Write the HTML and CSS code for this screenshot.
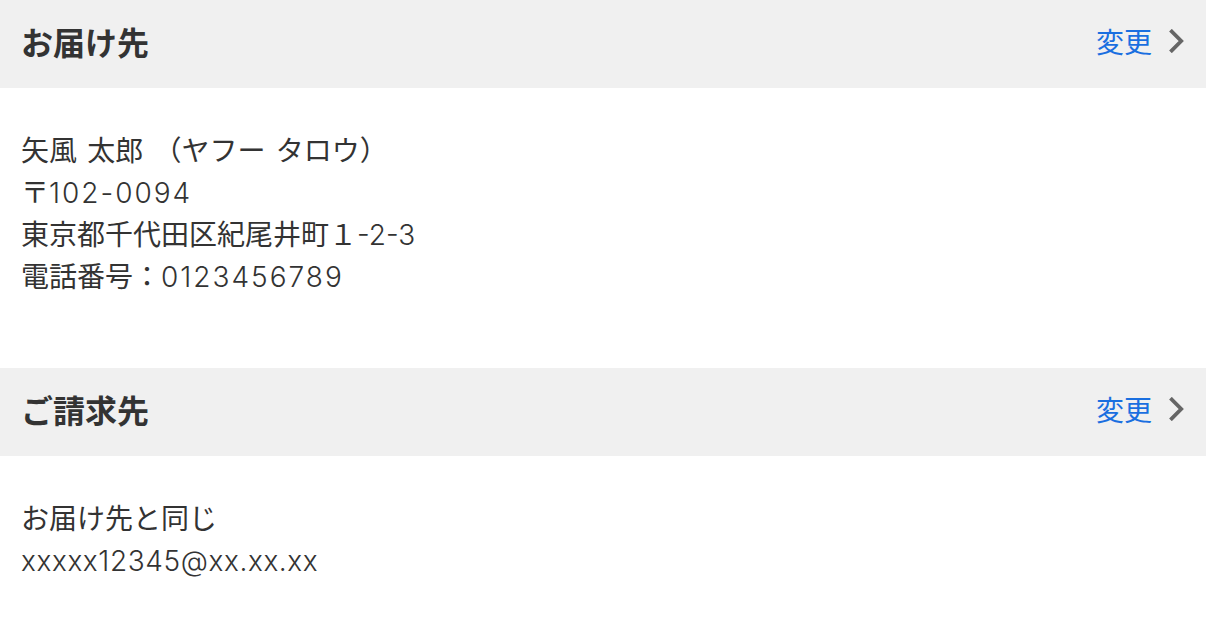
FILE: index.html
```html
<!DOCTYPE html>
<html lang="ja">
<head>
<meta charset="utf-8">
<link rel="stylesheet" href="styles.css">
</head>
<body>
<section class="section">
  <div class="sec-head">
    <h2 class="sec-title">お届け先</h2>
    <a class="change" href="#">変更<svg class="chev" viewBox="0 0 15 24" width="15" height="24"><path d="M2.8 2.5 L12.2 12 L2.8 21.5" fill="none" stroke="#666" stroke-width="3.8" stroke-linecap="square" stroke-linejoin="miter"/></svg></a>
  </div>
  <div class="sec-body">
    <p class="line">矢風 太郎 （ヤフー タロウ）</p>
    <p class="line">〒<span class="latin">102-0094</span></p>
    <p class="line">東京都千代田区紀尾井町１<span class="latin latin-tight">-2-3</span></p>
    <p class="line">電話番号：<span class="latin">0123456789</span></p>
  </div>
</section>
<section class="section">
  <div class="sec-head">
    <h2 class="sec-title">ご請求先</h2>
    <a class="change" href="#">変更<svg class="chev" viewBox="0 0 15 24" width="15" height="24"><path d="M2.8 2.5 L12.2 12 L2.8 21.5" fill="none" stroke="#666" stroke-width="3.8" stroke-linecap="square" stroke-linejoin="miter"/></svg></a>
  </div>
  <div class="sec-body sec-body-last">
    <p class="line">お届け先と同じ</p>
    <p class="line"><span class="latin latin-text">xxxxx12345@xx.xx.xx</span></p>
  </div>
</section>
</body>
</html>
```
FILE: styles.css
```css
html, body {
  margin: 0;
  padding: 0;
  background: #fff;
}
body {
  font-family: "Noto Sans CJK JP", "Noto Sans", sans-serif;
  color: #333;
}
.section {
  display: flex;
  flex-direction: column;
}
.sec-head {
  height: 88px;
  box-sizing: border-box;
  background: #f0f0f0;
  display: flex;
  align-items: center;
  justify-content: space-between;
  padding: 0 22px 6px 21px;
}
.sec-title {
  margin: 0;
  font-size: 32px;
  font-weight: 700;
  line-height: 1;
  color: #333;
}
.change {
  display: flex;
  align-items: center;
  gap: 17px;
  color: #1a6fe0;
  text-decoration: none;
  font-size: 28px;
  line-height: 1;
}
.chev {
  display: block;
}
.sec-body {
  padding: 40px 21px 72px;
}
.sec-body-last {
  padding-bottom: 40px;
}
.line {
  margin: 0;
  font-family: "Noto Sans CJK JP", sans-serif;
  font-size: 28px;
  font-weight: 400;
  line-height: 42px;
  word-spacing: 4px;
}
.latin {
  font-family: "Inter", "Liberation Sans", sans-serif;
  font-weight: 300;
  line-height: 1;
  letter-spacing: 2px;
}
.latin-text {
  letter-spacing: 0.6px;
}
.latin-tight {
  letter-spacing: 0;
}
```
